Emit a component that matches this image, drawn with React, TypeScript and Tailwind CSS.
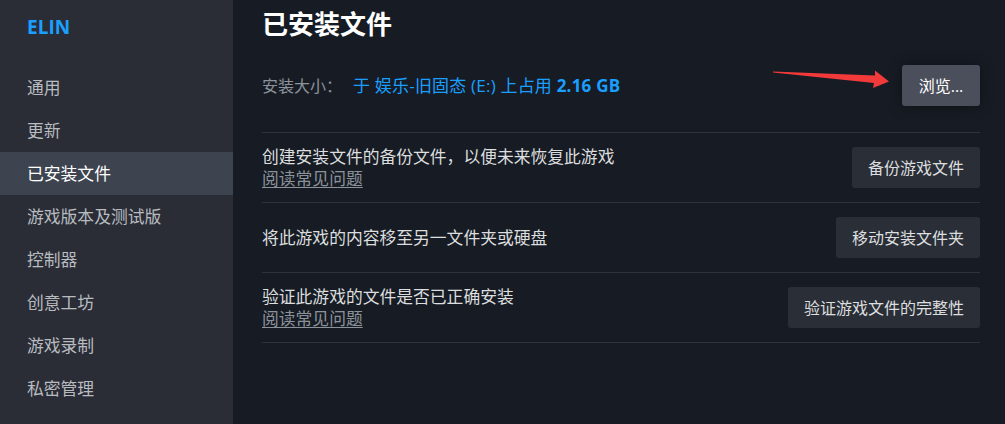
import React from "react";

const nav = ["通用", "更新", "已安装文件", "游戏版本及测试版", "控制器", "创意工坊", "游戏录制", "私密管理"];

function Row({ text, link, button }: { text: string; link?: boolean; button: string }) {
  return (
    <div className="flex h-[70px] items-center justify-between border-t border-[#2d323b]">
      <div className="flex flex-col">
        <div className="text-[16.8px] leading-[22px] text-[#dcdedf]">{text}</div>
        {link && <div className="text-[16.8px] leading-[22px] text-[#8b929a] underline underline-offset-[2px]">阅读常见问题</div>}
      </div>
      <button className="h-[41px] rounded-[3px] bg-[#2a2e37] px-[16px] text-[16px] text-[#dcdedf]">{button}</button>
    </div>
  );
}

export default function App() {
  return (
    <div
      className="flex h-[424px] w-[1005px] overflow-hidden bg-[#171c24]"
      style={{ fontFamily: '"Open Sans", "Noto Sans CJK SC", sans-serif' }}
    >
      <aside className="flex w-[233px] shrink-0 flex-col bg-[#2a2d35]">
        <div className="pl-[27px] pt-[14px] text-[19px] font-bold leading-[26px] text-[#1a9fff]">ELIN</div>
        <div className="mt-[26px] flex flex-col">
          {nav.map((n) => (
            <div
              key={n}
              className={
                n === "已安装文件"
                  ? "flex h-[43px] items-center bg-[#3d4450] pl-[27px] text-[16.8px] text-white"
                  : "flex h-[43px] items-center pl-[27px] text-[16.8px] text-[#b8bcc1]"
              }
            >
              {n}
            </div>
          ))}
        </div>
      </aside>
      <main className="flex flex-1 flex-col pl-[29px] pr-[25px] pt-[7px]">
        <h1 className="text-[26px] font-bold leading-[34px] text-white">已安装文件</h1>
        <div className="relative mt-[24px] flex h-[41px] items-center justify-between">
          <div className="flex items-center text-[16px]">
            <span className="text-[#8b929a]">安装大小：</span>
            <span className="ml-[11px] text-[17px] tracking-[0.2px] text-[#1a9fff]">
              于 娱乐-旧固态 (E:) 上占用 <span className="font-bold">2.16 GB</span>
            </span>
          </div>
          <svg className="absolute left-[508px] top-0" width="120" height="30" viewBox="508 0 120 30">
            <polygon points="511,6.5 613,10.5 613,5.5 627,16.5 611,23 612,18 511,7.5" fill="#f23a3a" />
          </svg>
          <button className="h-[41px] w-[78px] rounded-[3px] bg-[#4b4f5b] text-[16px] text-white shadow-[0_0_14px_rgba(0,0,0,0.45)]">
            浏览...
          </button>
        </div>
        <div className="mt-[26px]">
          <Row text="创建安装文件的备份文件，以便未来恢复此游戏" link button="备份游戏文件" />
          <Row text="将此游戏的内容移至另一文件夹或硬盘" button="移动安装文件夹" />
          <Row text="验证此游戏的文件是否已正确安装" link button="验证游戏文件的完整性" />
          <div className="border-t border-[#2d323b]" />
        </div>
      </main>
    </div>
  );
}
